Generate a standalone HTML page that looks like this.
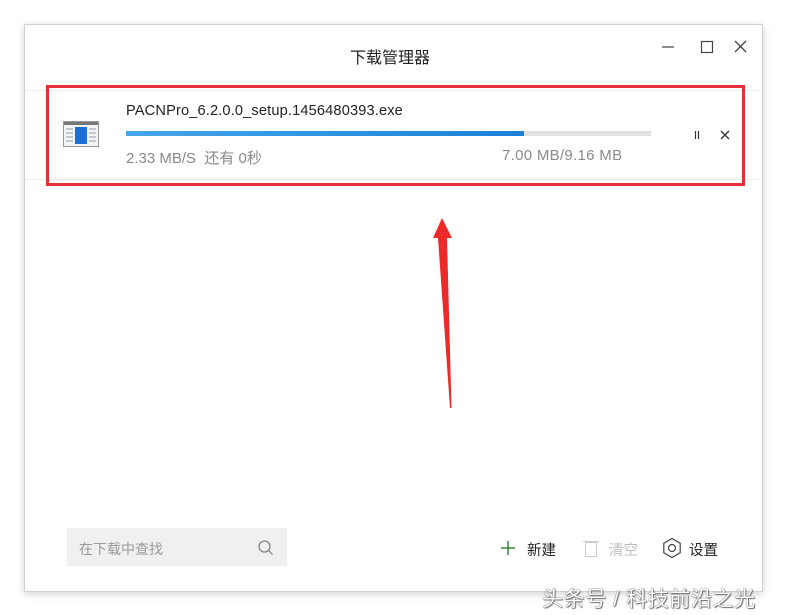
<!DOCTYPE html>
<html><head><meta charset="utf-8"><style>
body{margin:0;width:787px;height:615px;background:#fff;position:relative;overflow:hidden;font-family:"Liberation Sans","Noto Sans CJK SC",sans-serif}
.win{position:absolute;left:24px;top:24px;width:737px;height:566px;background:#fff;border:1px solid #d0d0d0;box-shadow:0 2px 8px rgba(0,0,0,.18)}
.a{position:absolute;white-space:nowrap}
</style></head><body>
<div class="win"></div>
<div class="a" style="left:0;top:44px;width:780px;text-align:center;font-size:16px;color:#222">下载管理器</div>
<svg class="a" style="left:660px;top:38px" width="100" height="18">
<line x1="2" y1="9" x2="14" y2="9" stroke="#444" stroke-width="1.2"/>
<rect x="41.5" y="3.5" width="11" height="11" fill="none" stroke="#444" stroke-width="1.2"/>
<path d="M75 3L86 14M86 3L75 14" stroke="#444" stroke-width="1.3"/>
</svg>
<div class="a" style="left:25px;top:90px;width:736px;height:88px;border-top:1px solid #eee;border-bottom:1px solid #eee"></div>
<div class="a" style="left:46px;top:85px;width:693px;height:95px;border:3px solid #e53039"></div>
<svg class="a" style="left:63px;top:121px" width="36" height="26">
<rect x="0.5" y="0.5" width="35" height="25" fill="#f4f4f4" stroke="#999"/>
<rect x="1" y="1" width="34" height="3" fill="#777"/>
<rect x="12" y="6" width="12" height="17" fill="#1b6fd8"/>
<g stroke="#8a9bb0" stroke-width="1"><line x1="3" y1="8" x2="10" y2="8"/><line x1="3" y1="12" x2="10" y2="12"/><line x1="3" y1="16" x2="10" y2="16"/><line x1="3" y1="20" x2="10" y2="20"/><line x1="26" y1="8" x2="33" y2="8"/><line x1="26" y1="12" x2="33" y2="12"/><line x1="26" y1="16" x2="33" y2="16"/><line x1="26" y1="20" x2="33" y2="20"/></g>
</svg>
<div class="a" style="left:126px;top:103px;font-size:14.6px;letter-spacing:0.15px;color:#222">PACNPro_6.2.0.0_setup.1456480393.exe</div>
<div class="a" style="left:126px;top:131px;width:525px;height:5px;background:#e2e2e2"></div>
<div class="a" style="left:126px;top:131px;width:398px;height:5px;background:linear-gradient(90deg,#45a6ea,#1e7fd8)"></div>
<div class="a" style="left:126px;top:147px;font-size:15px;color:#8a8a8a">2.33 MB/S&nbsp; 还有 0秒</div>
<div class="a" style="left:502px;top:147px;font-size:15px;letter-spacing:0.3px;color:#8a8a8a">7.00 MB/9.16 MB</div>
<svg class="a" style="left:690px;top:128px" width="45" height="14">
<line x1="5.5" y1="3" x2="5.5" y2="11" stroke="#333" stroke-width="1.2"/><line x1="8.5" y1="3" x2="8.5" y2="11" stroke="#333" stroke-width="1.2"/>
<path d="M31 3L39 11M39 3L31 11" stroke="#333" stroke-width="1.3"/>
</svg>
<svg class="a" style="left:430px;top:216px" width="26" height="196">
<path d="M12 2L22 22L17 22L21.5 192L20 192L8 22L3 22Z" fill="#ec2a2a"/>
</svg>
<div class="a" style="left:67px;top:528px;width:220px;height:38px;background:#f0f0f0"></div>
<div class="a" style="left:79px;top:539px;font-size:14px;color:#9a9a9a">在下载中查找</div>
<svg class="a" style="left:257px;top:539px" width="18" height="18"><circle cx="7.5" cy="7.5" r="5.5" fill="none" stroke="#888" stroke-width="1.3"/><line x1="11.5" y1="11.5" x2="15.5" y2="15.5" stroke="#888" stroke-width="1.3"/></svg>
<svg class="a" style="left:499px;top:539px" width="18" height="18"><path d="M9 2V16M2 9H16" stroke="#3a8a3a" stroke-width="1.5"/></svg>
<div class="a" style="left:527px;top:539px;font-size:14.5px;color:#222">新建</div>
<svg class="a" style="left:583px;top:538px" width="16" height="20"><rect x="2.5" y="4.5" width="11" height="14" fill="none" stroke="#ccc"/><line x1="0" y1="3.5" x2="16" y2="3.5" stroke="#ccc"/></svg>
<div class="a" style="left:609px;top:539px;font-size:14.5px;color:#c0c0c0">清空</div>
<svg class="a" style="left:661px;top:537px" width="22" height="22"><path d="M11 1.5L19.2 6.25V15.75L11 20.5L2.8 15.75V6.25Z" fill="none" stroke="#444" stroke-width="1.2"/><circle cx="11" cy="11" r="3.5" fill="none" stroke="#444" stroke-width="1.2"/></svg>
<div class="a" style="left:689px;top:539px;font-size:14.5px;color:#222">设置</div>
<div class="a" style="left:542px;top:583px;font-size:21px;color:#fff;text-shadow:0 0 1px #555,0 0 1px #555,1px 1px 1px #777;letter-spacing:0.6px">头条号 / 科技前沿之光</div>
</body></html>
